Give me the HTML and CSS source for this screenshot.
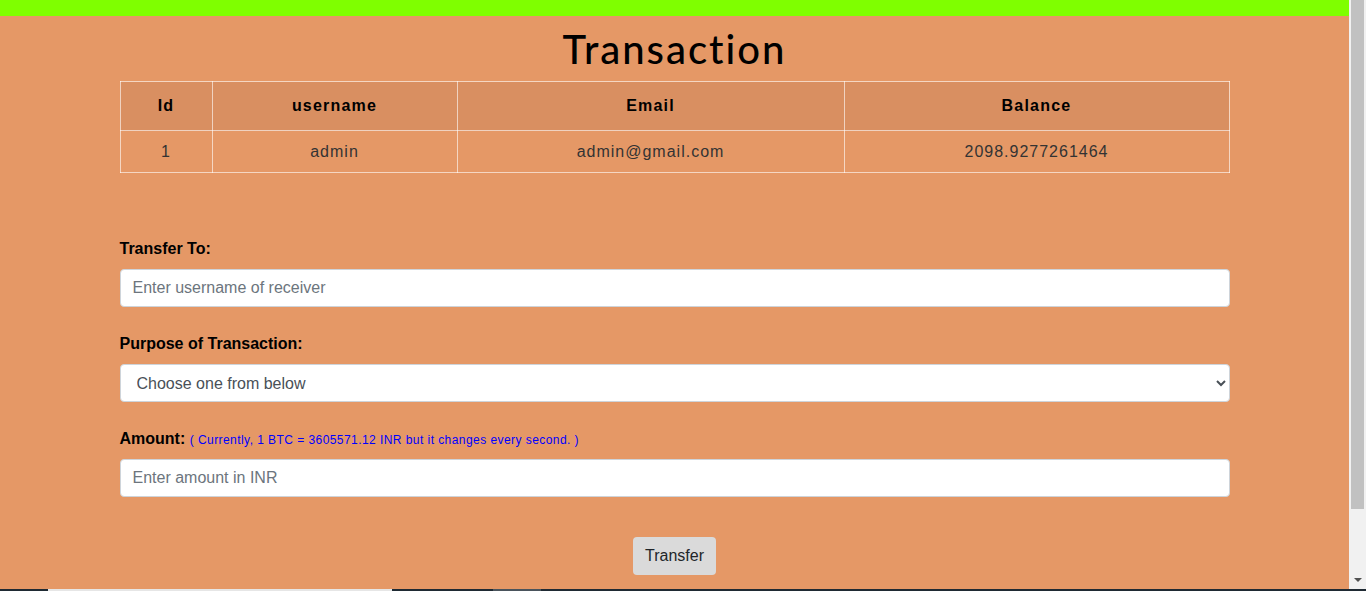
FILE: index.html
```html
<!DOCTYPE html>
<html lang="en">
<head>
<meta charset="utf-8">
<title>Transaction</title>
<link rel="stylesheet" href="styles.css">
</head>
<body>
<div class="window">
  <div class="page">
    <div class="topbar"></div>
    <div class="container">
      <h1 class="title">Transaction</h1>
      <table class="info">
        <thead>
          <tr>
            <th class="c-id">Id</th>
            <th class="c-user">username</th>
            <th class="c-mail">Email</th>
            <th class="c-bal">Balance</th>
          </tr>
        </thead>
        <tbody>
          <tr>
            <td>1</td>
            <td>admin</td>
            <td>admin@gmail.com</td>
            <td>2098.9277261464</td>
          </tr>
        </tbody>
      </table>

      <form class="form">
        <div class="group">
          <label class="label" for="to">Transfer To:</label>
          <input class="control" id="to" type="text" placeholder="Enter username of receiver">
        </div>
        <div class="group">
          <label class="label" for="purpose">Purpose of Transaction:</label>
          <select class="control select" id="purpose">
            <option>Choose one from below</option>
          </select>
        </div>
        <div class="group">
          <label class="label" for="amount">Amount: <small class="rate">( Currently, 1 BTC = 3605571.12 INR but it changes every second. )</small></label>
          <input class="control" id="amount" type="text" placeholder="Enter amount in INR">
        </div>
        <div class="actions">
          <button class="btn" type="button">Transfer</button>
        </div>
      </form>
    </div>
  </div>
  <div class="scrollbar">
    <div class="thumb"></div>
    <div class="arrow"></div>
  </div>
</div>
<div class="taskbar">
  <span class="seg dark1"></span>
  <span class="seg light"></span>
  <span class="seg dark2"></span>
  <span class="seg mid"></span>
  <span class="seg dark3"></span>
</div>
</body>
</html>
```

FILE: styles.css
```css
html, body {
  margin: 0;
  padding: 0;
  height: 100%;
  overflow: hidden;
}

body {
  display: flex;
  flex-direction: column;
  font-family: "Liberation Sans", Arial, sans-serif;
  font-size: 16px;
  color: #212529;
  background: #e59866;
}

.window {
  flex: 1;
  display: flex;
  min-height: 0;
}

.page {
  flex: 1;
  min-width: 0;
  background: #e59866;
  overflow: hidden;
}

.topbar {
  height: 16px;
  background: #7fff00;
}

.container {
  width: 1110px;
  margin: 0 auto;
}

.title {
  margin: 9px 0 8px;
  font-family: "Lato", "Inter", sans-serif;
  font-weight: 500;
  font-size: 40px;
  line-height: 48px;
  text-align: center;
  color: #000;
  letter-spacing: 2px;
}

.info {
  width: 1110px;
  border-collapse: collapse;
  table-layout: fixed;
  text-align: center;
}

.info th,
.info td {
  border: 1px solid rgba(255, 255, 255, 0.6);
  padding: 0;
}

.info th {
  height: 48px;
  font-weight: bold;
  letter-spacing: 1.2px;
  color: #000;
  background: #d98f61;
}

.info td {
  height: 41px;
  letter-spacing: 1px;
  color: #333;
}

.c-id { width: 91px; }
.c-user { width: 244px; }
.c-mail { width: 386px; }

.form {
  margin-top: 64px;
}

.group {
  margin-bottom: 25px;
}

.label {
  display: block;
  margin-bottom: 8px;
  height: 24px;
  line-height: 24px;
  font-weight: bold;
  color: #000;
}

.rate {
  font-weight: normal;
  font-size: 12px;
  line-height: 1;
  color: #0000ff;
  letter-spacing: 0.44px;
}

.control {
  display: block;
  box-sizing: border-box;
  width: 100%;
  height: 38px;
  padding: 6px 12px;
  font-family: "Liberation Sans", Arial, sans-serif;
  font-size: 16px;
  color: #495057;
  background: #fff;
  border: 1px solid #ced4da;
  border-radius: 4px;
  outline: none;
}

.control::placeholder {
  color: #6c757d;
}

.select {
  padding: 6px 12px;
}

.actions {
  display: flex;
  justify-content: center;
  padding-top: 15px;
}

.btn {
  height: 38px;
  padding: 0 12px;
  font-family: "Liberation Sans", Arial, sans-serif;
  font-size: 16px;
  color: #212529;
  background: #dadada;
  border: none;
  border-radius: 4px;
}

.scrollbar {
  width: 17px;
  background: #f1f1f1;
  display: flex;
  flex-direction: column;
  align-items: center;
}

.thumb {
  width: 13px;
  height: 509px;
  background: #c1c1c1;
}

.arrow {
  margin-top: 69px;
  width: 0;
  height: 0;
  border-left: 4px solid transparent;
  border-right: 4px solid transparent;
  border-top: 4px solid #505050;
}

.taskbar {
  height: 2px;
  display: flex;
  background: #1f2a33;
}

.seg { display: block; height: 2px; }
.dark1 { width: 48px; background: #1f2a33; }
.light { width: 344px; background: #e6e6e6; }
.dark2 { width: 101px; background: #1f2a33; }
.mid { width: 48px; background: #4a545c; }
.dark3 { flex: 1; background: #1f2a33; }
```
